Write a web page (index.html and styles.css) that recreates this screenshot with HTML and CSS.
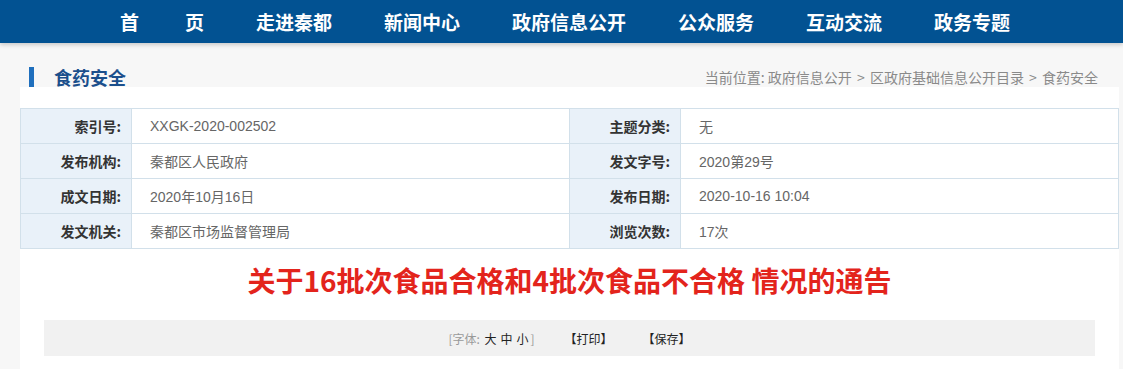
FILE: index.html
```html
<!DOCTYPE html>
<html lang="zh-CN">
<head>
  <meta charset="UTF-8" />
  <meta name="viewport" content="width=device-width, initial-scale=1.0"/>
  <title>食药安全</title>
  <link rel="stylesheet" href="styles.css">
</head>
<body>
  <div id="nav">
    <a class="home" href="#">首页</a>
    <a href="#">走进秦都</a>
    <a href="#">新闻中心</a>
    <a href="#">政府信息公开</a>
    <a href="#">公众服务</a>
    <a href="#">互动交流</a>
    <a href="#">政务专题</a>
  </div>

  <div id="section">
    <h2 class="section-title">食药安全</h2>
    <div class="crumbs">当前位置: 政府信息公开 <span>&gt;</span> 区政府基础信息公开目录 <span>&gt;</span> 食药安全</div>
  </div>

  <div id="content">
    <table class="meta">
      <tr>
        <th>索引号:</th><td>XXGK-2020-002502</td>
        <th>主题分类:</th><td>无</td>
      </tr>
      <tr>
        <th>发布机构:</th><td>秦都区人民政府</td>
        <th>发文字号:</th><td>2020第29号</td>
      </tr>
      <tr>
        <th>成文日期:</th><td>2020年10月16日</td>
        <th>发布日期:</th><td>2020-10-16 10:04</td>
      </tr>
      <tr>
        <th>发文机关:</th><td>秦都区市场监督管理局</td>
        <th>浏览次数:</th><td>17次</td>
      </tr>
    </table>

    <h1 class="article-title">关于16批次食品合格和4批次食品不合格 情况的通告</h1>

    <div class="tools">
      <span class="fontsize">[字体: <a href="#">大</a><a href="#">中</a><a href="#">小</a>]</span>
      <a href="#">【打印】</a>
      <a href="#">【保存】</a>
    </div>
  </div>
</body>
</html>
```

FILE: styles.css
```css
body {
  margin: 0;
  padding: 0;
  background-color: #f7f7f7;
  font-family: "Microsoft YaHei", "Noto Sans CJK SC", sans-serif;
  color: #333;
}
a {
  color: inherit;
  text-decoration: none;
}
#nav {
  height: 43px;
  background-color: #025292;
  box-shadow: 0 2px 4px rgba(0, 0, 0, 0.18);
  display: flex;
  align-items: center;
  gap: 52px;
  padding-left: 120px;
  position: relative;
}
#nav a {
  color: #fff;
  font-size: 19px;
  font-weight: 700;
  line-height: 43px;
}
#nav a.home {
  letter-spacing: 46px;
  margin-right: -46px;
}
#section {
  display: flex;
  align-items: center;
  justify-content: space-between;
  height: 20px;
  padding: 24px 25px 0 29px;
}
.section-title {
  margin: 0;
  padding-left: 20px;
  border-left: 5px solid #1f6fbd;
  height: 20px;
  line-height: 20px;
  font-size: 18px;
  font-weight: 700;
  color: #1b4f8c;
}
.crumbs {
  font-size: 14px;
  color: #8a8a8a;
}
.crumbs span {
  margin: 0 2px;
}
#content {
  background-color: #fff;
  margin: 0 4px 0 20px;
  padding: 21px 0 20px;
}
.meta {
  width: 100%;
  border-collapse: collapse;
  table-layout: fixed;
  font-size: 14px;
}
.meta th, .meta td {
  height: 34px;
  border: 1px solid #d2e0ea;
  padding: 0;
}
.meta th {
  width: 100px;
  background-color: #e9f1f9;
  text-align: right;
  padding-right: 10px;
  font-weight: 700;
  color: #333;
}
.meta td {
  padding-left: 18px;
  color: #666;
  font-family: "Liberation Sans", "Microsoft YaHei", "Noto Sans CJK SC", sans-serif;
}
.article-title {
  margin: 13px 0 0;
  text-align: center;
  font-size: 28px;
  line-height: 36px;
  font-weight: 700;
  color: #e3241c;
}
.tools {
  margin: 22px 24px 0;
  height: 36px;
  background-color: #f1f1f1;
  display: flex;
  align-items: center;
  justify-content: center;
  gap: 30px;
  font-size: 12px;
  color: #222;
}
.tools .fontsize {
  color: #999;
}
.tools .fontsize a {
  color: #222;
  margin: 0 2px;
}
```
